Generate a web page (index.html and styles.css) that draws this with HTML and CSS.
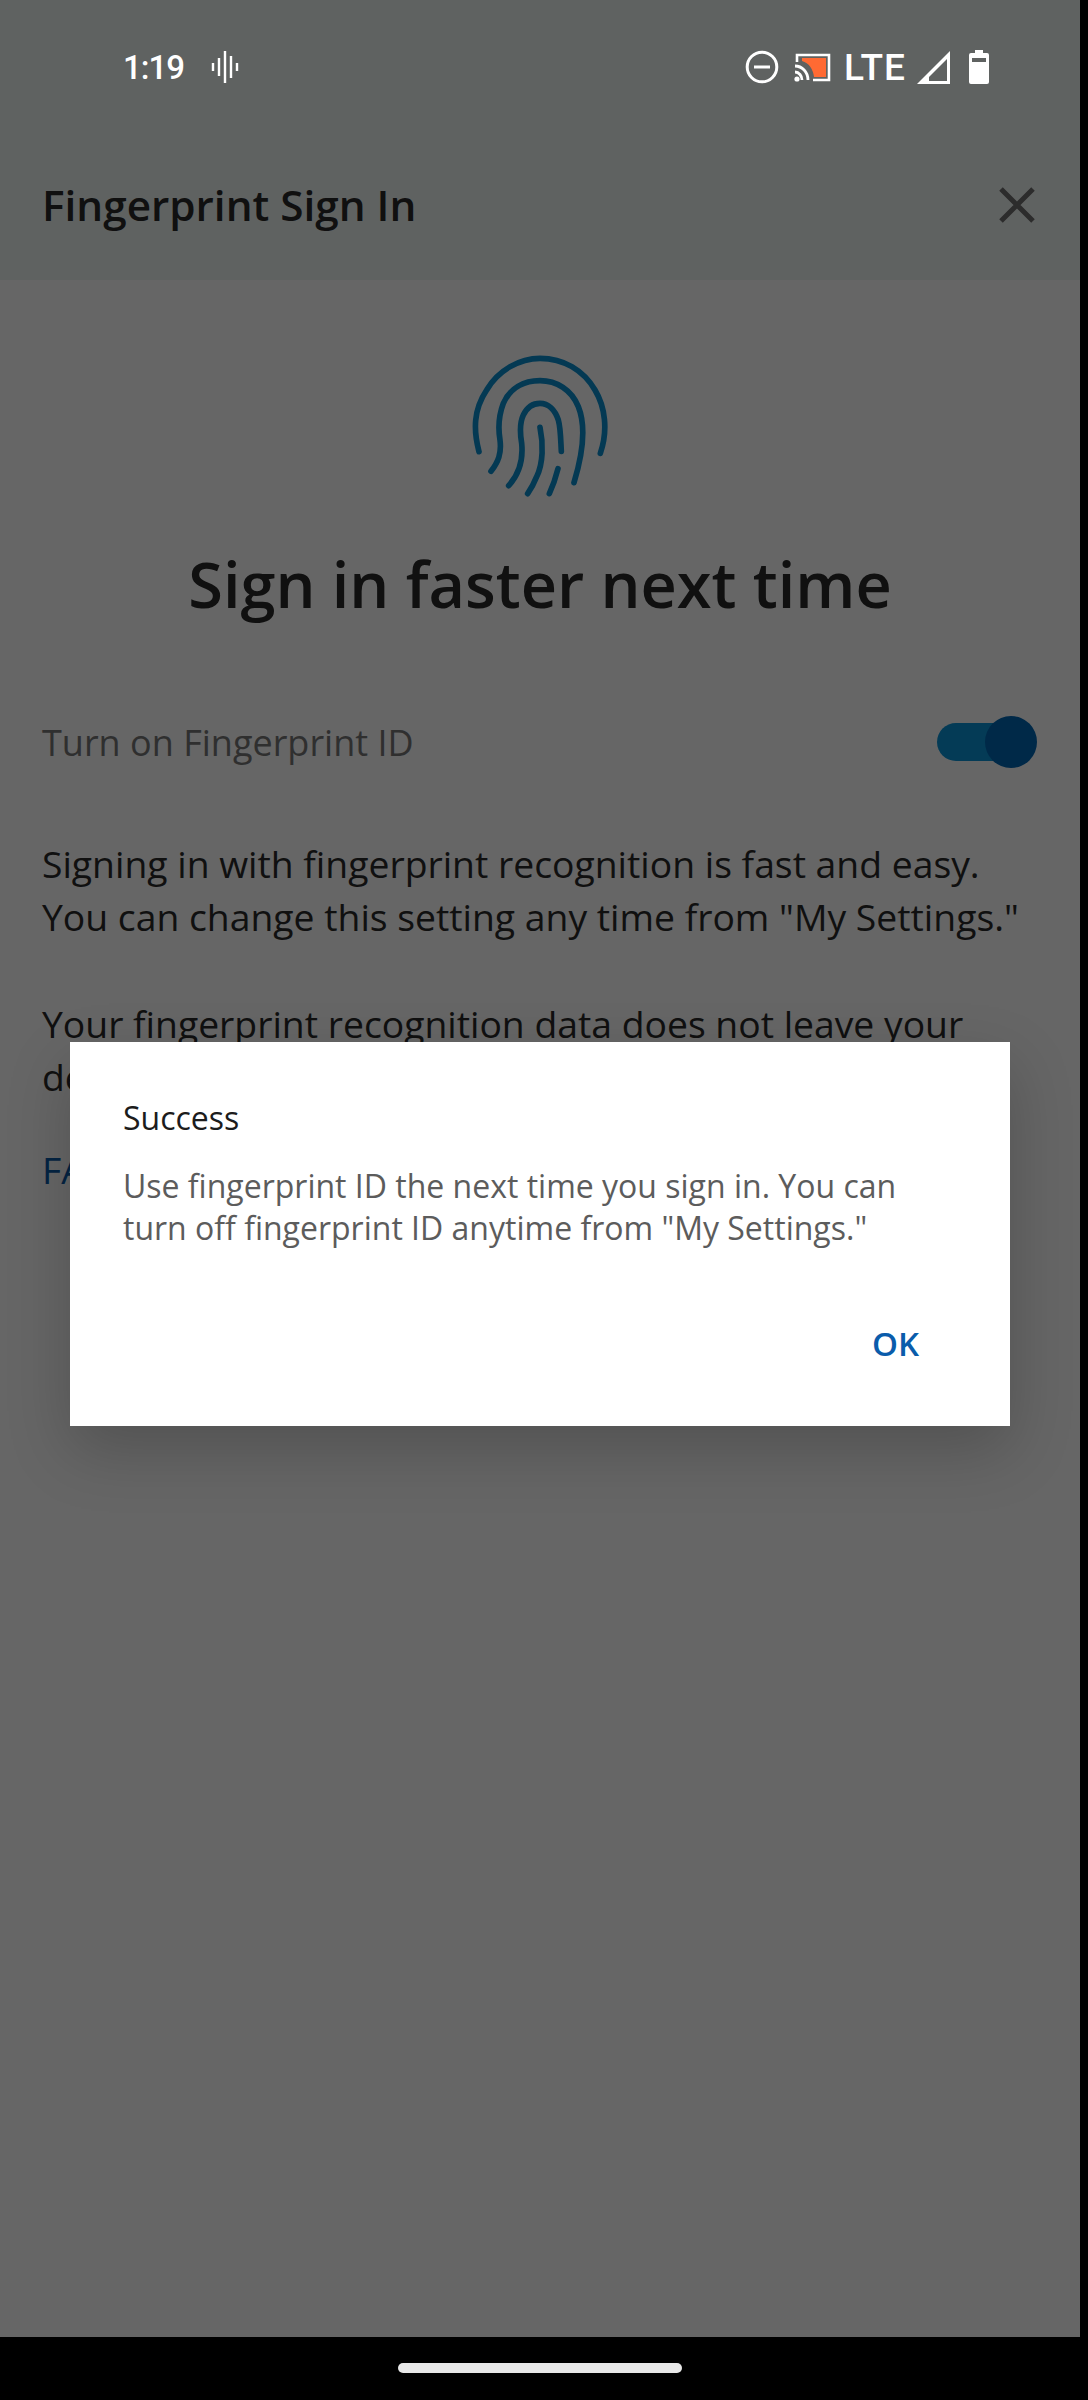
FILE: index.html
```html
<!DOCTYPE html>
<html lang="en">
<head>
	<meta charset="UTF-8">
	<title>Fingerprint Sign In</title>
	<link rel="stylesheet" href="styles.css">
</head>
<body>
<div class="screen">
	<div class="top">
		<div class="status">
			<span class="time">1:19</span>
			<svg class="wave" width="28" height="34" viewBox="0 0 28 34"><path d="M2 13v8M8 8v18M14 1v32M20 6v22M26 13v8" fill="none" stroke="#fff" stroke-width="2.4"/></svg>
			<span class="grow"></span>
			<svg width="34" height="34" viewBox="0 0 34 34"><circle cx="17" cy="17" r="14.8" fill="none" stroke="#fff" stroke-width="3"/><path d="M9 17h16" stroke="#fff" stroke-width="3"/></svg>
			<svg class="cast" width="38" height="30" viewBox="0 0 38 30"><path d="M3 10V3h32v25H19" fill="none" stroke="#fff" stroke-width="2.6"/><path d="M8 6h24v19H20C19 17 15 11 8 9z" fill="#ff6a33"/><path d="M1 14c7 0 13 6 13 14M1 20c4 0 7 4 7 8" fill="none" stroke="#fff" stroke-width="2.8"/><circle cx="3" cy="27" r="2.6" fill="#fff"/></svg>
			<span class="lte">LTE</span>
			<svg class="signal" width="34" height="33" viewBox="0 0 34 33"><path d="M33 0v33H0zM30 8L12 26v4h18z" fill="#fff" fill-rule="evenodd"/></svg>
			<svg class="battery" width="20" height="34" viewBox="0 0 20 34"><path d="M6 0h8v3h4a2 2 0 0 1 2 2v27a2 2 0 0 1-2 2H2a2 2 0 0 1-2-2V5a2 2 0 0 1 2-2h4zM3 8v4h14V8z" fill="#fff" fill-rule="evenodd"/></svg>
		</div>
		<div class="toolbar">
			<span class="toolbar-title">Fingerprint Sign In</span>
			<svg width="38" height="38" viewBox="0 0 38 38"><path d="M3 3l32 32M35 3L3 35" stroke="#6e6e6e" stroke-width="5" fill="none"/></svg>
		</div>
	</div>
	<div class="content">
		<svg class="print" width="200" height="170" viewBox="0 0 600 510" fill="none" stroke="#0a8fd0" stroke-width="17" stroke-linecap="round">
			<path d="M117 335C100 270 100 210 140 150C175 90 240 55 300 55C370 55 430 90 465 150C495 200 505 270 481 340"/>
			<path d="M153 394C175 365 185 340 180 300C175 270 175 230 190 190C210 145 250 122 300 122C350 122 395 150 415 200C435 250 435 320 402 428"/>
			<path d="M206 437C235 405 250 360 245 310C240 280 238 250 250 225C262 200 280 190 300 190C325 190 345 210 355 240C362 265 362 300 364 334"/>
			<path d="M300 262C310 310 310 370 290 410C282 430 272 448 263 461"/>
			<path d="M354 386C348 410 340 435 328 461"/>
		</svg>
		<h1>Sign in faster next time</h1>
		<div class="toggle-row">
			<span>Turn on Fingerprint ID</span>
			<span class="toggle"><span class="knob"></span></span>
		</div>
		<p>Signing in with fingerprint recognition is fast and easy. You can change this setting any time from "My Settings."</p>
		<p>Your fingerprint recognition data does not leave your device.</p>
		<a class="faq">FAQs</a>
	</div>
	<div class="scrim">
		<div class="dialog">
			<div class="dialog-title">Success</div>
			<div class="dialog-text">Use fingerprint ID the next time you sign in. You can turn off fingerprint ID anytime from "My Settings."</div>
			<div class="dialog-actions"><a class="ok">OK</a></div>
		</div>
	</div>
</div>
<div class="nav"><span class="pill"></span></div>
</body>
</html>
```

FILE: styles.css
```css
body {
	margin: 0;
	width: 1088px;
	height: 2400px;
	background: #000;
	overflow: hidden;
	font-family: "Open Sans", sans-serif;
}
.screen {
	position: relative;
	width: 1080px;
	height: 2337px;
	background: #fff;
	overflow: hidden;
}
.top {
	background: #eef5f3;
	height: 280px;
}
.status {
	position: relative;
	z-index: 2;
	display: flex;
	align-items: center;
	height: 134px;
	padding: 0 91px 0 123px;
	box-sizing: border-box;
}
.time {
	font-family: Roboto, sans-serif;
	font-weight: 500;
	font-size: 33px;
	letter-spacing: -1px;
	color: #fff;
	margin-right: 27px;
}
.grow {
	flex: 1;
}
.cast {
	margin-left: 15px;
}
.lte {
	font-family: Roboto, sans-serif;
	font-weight: 500;
	font-size: 37px;
	color: #fff;
	margin-left: 12px;
	letter-spacing: 1px;
}
.signal {
	margin-left: 11px;
}
.battery {
	margin-left: 18px;
}
.toolbar {
	display: flex;
	align-items: center;
	justify-content: space-between;
	height: 141px;
	padding: 0 44px 0 42px;
}
.toolbar-title {
	font-size: 42.3px;
	font-weight: 600;
	color: #2a2a2a;
}
.content {
	padding: 60px 42px 0;
}
.print {
	display: block;
	margin: 0 auto;
}
h1 {
	margin: 33px 0 0;
	font-size: 63px;
	line-height: 82px;
	font-weight: 600;
	text-align: center;
	color: #2a2a2a;
}
.toggle-row {
	display: flex;
	align-items: center;
	justify-content: space-between;
	margin-top: 91px;
	height: 52px;
	font-size: 36px;
	color: #777;
}
.toggle {
	position: relative;
	width: 98px;
	height: 38px;
	border-radius: 19px;
	background: #0a94d6;
	margin-right: 3px;
}
.knob {
	position: absolute;
	right: -2px;
	top: -7px;
	width: 52px;
	height: 52px;
	border-radius: 50%;
	background: #0066b3;
}
p {
	margin: 54px 0 0;
	font-size: 37.3px;
	line-height: 53px;
	color: #2a2a2a;
}
.toggle-row + p {
	margin-top: 69px;
}
.faq {
	display: block;
	margin-top: 40px;
	font-size: 37.3px;
	line-height: 53px;
	color: #0a5aa8;
}
.scrim {
	position: absolute;
	inset: 0;
	padding-top: 131px;
	box-sizing: border-box;
	display: flex;
	align-items: center;
	justify-content: center;
	background: rgba(0, 0, 0, .6);
}
.dialog {
	width: 940px;
	height: 384px;
	box-sizing: border-box;
	padding: 54px 53px 0;
	background: #fff;
	box-shadow: 0 24px 60px rgba(0, 0, 0, .2);
}
.dialog-title {
	font-size: 32px;
	line-height: 44px;
	color: #1c1c1c;
}
.dialog-text {
	margin-top: 25px;
	font-size: 32px;
	line-height: 42px;
	color: #5c5c5c;
}
.dialog-actions {
	display: flex;
	justify-content: flex-end;
	margin-top: 73px;
	padding-right: 38px;
}
.ok {
	font-size: 33px;
	line-height: 44px;
	font-weight: 600;
	color: #0a5cab;
}
.nav {
	display: flex;
	justify-content: center;
	padding: 26px 8px 0 0;
}
.pill {
	width: 284px;
	height: 10px;
	border-radius: 5px;
	background: #e8e8e8;
}
```
